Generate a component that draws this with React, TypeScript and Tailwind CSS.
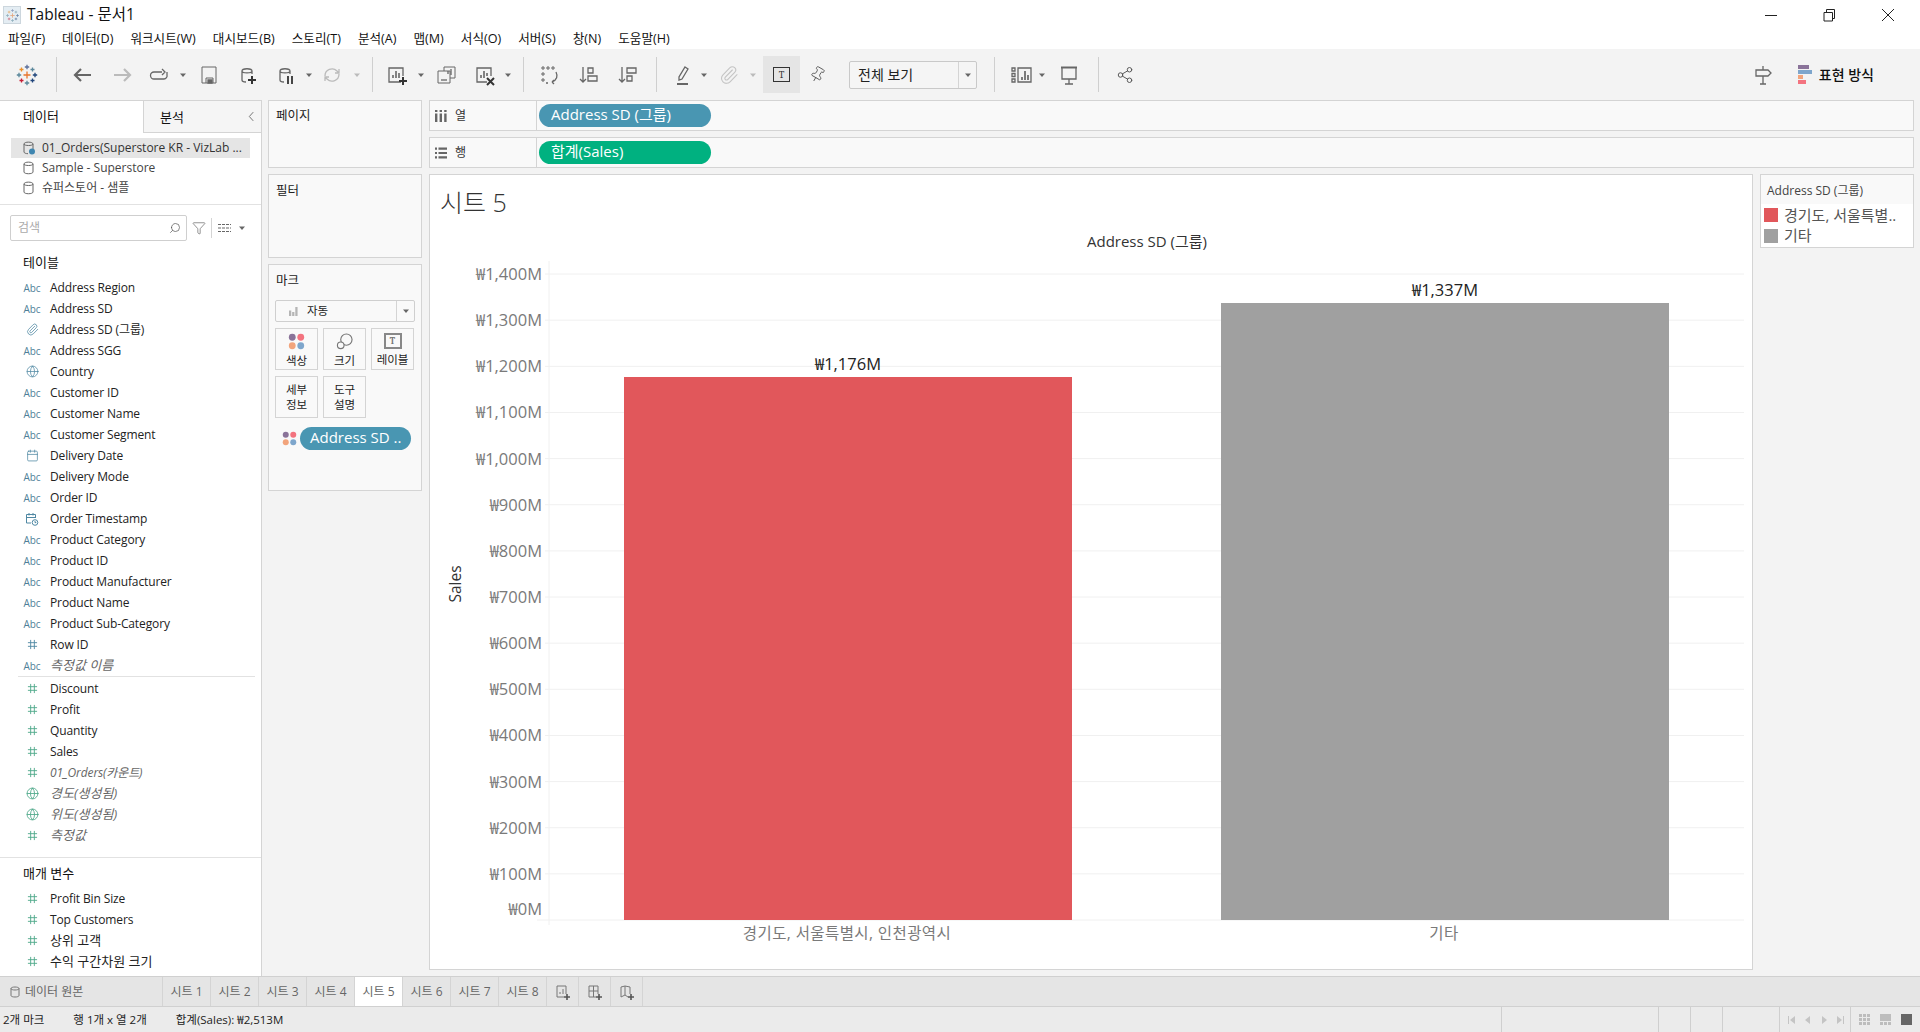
import { ReactNode } from "react";
import { Calendar, Globe, Paperclip, Search, Funnel, Share2, Pin } from "lucide-react";

const dims: [string, string, boolean?][] = [
  ["abc", "Address Region"],
  ["abc", "Address SD"],
  ["clip", "Address SD (그룹)"],
  ["abc", "Address SGG"],
  ["globe", "Country"],
  ["abc", "Customer ID"],
  ["abc", "Customer Name"],
  ["abc", "Customer Segment"],
  ["date", "Delivery Date"],
  ["abc", "Delivery Mode"],
  ["abc", "Order ID"],
  ["datetime", "Order Timestamp"],
  ["abc", "Product Category"],
  ["abc", "Product ID"],
  ["abc", "Product Manufacturer"],
  ["abc", "Product Name"],
  ["abc", "Product Sub-Category"],
  ["hash", "Row ID"],
  ["abc", "측정값 이름", true],
];
const measures: [string, string, boolean?][] = [
  ["hashg", "Discount"],
  ["hashg", "Profit"],
  ["hashg", "Quantity"],
  ["hashg", "Sales"],
  ["hashg", "01_Orders(카운트)", true],
  ["globeg", "경도(생성됨)", true],
  ["globeg", "위도(생성됨)", true],
  ["hashg", "측정값", true],
];
const params: [string, string, boolean?][] = [
  ["hashg", "Profit Bin Size"],
  ["hashg", "Top Customers"],
  ["hashg", "상위 고객"],
  ["hashg", "수익 구간차원 크기"],
];
const menus = ["파일(F)", "데이터(D)", "워크시트(W)", "대시보드(B)", "스토리(T)", "분석(A)", "맵(M)", "서식(O)", "서버(S)", "창(N)", "도움말(H)"];
const sheets = ["시트 1", "시트 2", "시트 3", "시트 4", "시트 5", "시트 6", "시트 7", "시트 8"];
const ticks = [1400, 1300, 1200, 1100, 1000, 900, 800, 700, 600, 500, 400, 300, 200, 100];

function Ico({ children, className = "" }: { children: ReactNode; className?: string }) {
  return (
    <svg viewBox="0 0 24 24" fill="none" stroke="#666" strokeWidth="1.3" className={`w-6 h-6 shrink-0 ${className}`}>
      {children}
    </svg>
  );
}

function Caret({ className = "", light = false }: { className?: string; light?: boolean }) {
  return (
    <svg viewBox="0 0 8 8" className={`w-2 h-2 shrink-0 ${className}`}>
      <path d="M1 2.5h6L4 6z" fill={light ? "#bbb" : "#666"} />
    </svg>
  );
}

function Sep({ className = "" }: { className?: string }) {
  return <div className={`w-px h-[35px] bg-[#cfcfcf] shrink-0 ${className}`} />;
}

function Cyl({ color = "#666" }: { color?: string }) {
  return (
    <path
      d="M7 8c0-3 10-3 10 0v3M7 8c0 2.5 10 2.5 10 0M7 8v9c0 1.5 2 2 4 2"
      stroke={color}
      fill="none"
    />
  );
}

function Dots({ small = false }: { small?: boolean }) {
  return (
    <svg viewBox="0 0 16 16" className={small ? "w-[15px] h-[15px] shrink-0" : "w-[17px] h-[17px] shrink-0"}>
      <circle cx="4" cy="4" r="3.2" fill="#8a7399" />
      <circle cx="12" cy="4" r="3.2" fill="#f3737f" />
      <circle cx="4" cy="12" r="3.2" fill="#f2a47c" />
      <circle cx="12" cy="12" r="3.2" fill="#7ea6cc" />
    </svg>
  );
}

function TableauMark({ size }: { size: string }) {
  const marks: [number, number, number, string][] = [
    [12, 12, 3.5, "#e8762d"],
    [12, 4, 2.2, "#5b6f9b"],
    [12, 20, 2.2, "#59879b"],
    [4, 12, 2.2, "#59879b"],
    [20, 12, 2.2, "#1f447a"],
    [6.5, 6.5, 2, "#eb912b"],
    [17.5, 6.5, 2, "#5b879b"],
    [6.5, 17.5, 2, "#c72037"],
    [17.5, 17.5, 2, "#1f447a"],
  ];
  return (
    <svg viewBox="0 0 24 24" className={size} fill="none" strokeWidth="1.3">
      {marks.map(([x, y, r, c], i) => (
        <path key={i} d={`M${x - r} ${y}H${x + r}M${x} ${y - r}V${y + r}`} stroke={c} />
      ))}
    </svg>
  );
}

function FieldIcon({ kind }: { kind: string }) {
  const blue = "#4f88a3";
  const green = "#4fa98a";
  if (kind === "abc") {
    return <span className="w-[24px] text-[10px] font-medium text-[#4f7f99] text-center leading-none">Abc</span>;
  }
  if (kind === "clip") return <span className="w-[24px] flex justify-center"><Paperclip size={13} color={blue} strokeWidth={1.4} /></span>;
  if (kind === "globe") return <span className="w-[24px] flex justify-center"><Globe size={13} color={blue} strokeWidth={1.4} /></span>;
  if (kind === "globeg") return <span className="w-[24px] flex justify-center"><Globe size={13} color={green} strokeWidth={1.6} /></span>;
  if (kind === "date") return <span className="w-[24px] flex justify-center"><Calendar size={13} color={blue} strokeWidth={1.4} /></span>;
  if (kind === "datetime") {
    return (
      <span className="w-[24px] flex justify-center">
        <svg viewBox="0 0 14 14" className="w-[14px] h-[14px]" fill="none" stroke={blue} strokeWidth="1">
          <path d="M6 11H1.5V2.5h9V6M1.5 5.5h9M4 1v2.5M8 1v2.5" />
          <circle cx="10" cy="10.5" r="2.8" />
          <path d="M10 9v1.6h1.3" />
        </svg>
      </span>
    );
  }
  const c = kind === "hashg" ? green : blue;
  return (
    <span className="w-[24px] flex justify-center">
      <svg viewBox="0 0 12 12" className="w-[11px] h-[11px]" fill="none" stroke={c} strokeWidth="1">
        <path d="M4 1v10M8 1v10M1 4h10M1 8h10" />
      </svg>
    </span>
  );
}

function FieldRow({ kind, label, italic }: { kind: string; label: string; italic?: boolean }) {
  const hangul = /^[^A-Za-z]+$/.test(label);
  const size = hangul ? "text-[13px]" : "text-[12px] tracking-[-0.12px]";
  return (
    <div className="h-[21px] flex items-center pl-[20px]">
      <FieldIcon kind={kind} />
      <span className={`ml-[6px] whitespace-nowrap ${size} ${italic ? "italic text-[#666]" : "text-[#222]"}`}>{label}</span>
    </div>
  );
}

function MarkButton({ children, label }: { children?: ReactNode; label: ReactNode }) {
  return (
    <div className={`w-[43px] h-[42px] border border-[#d4d4d4] bg-[#f9f9f9] flex flex-col items-center text-[11.5px] leading-[15px] text-[#222] text-center whitespace-nowrap ${children ? "justify-start pt-[4px]" : "justify-center"}`}>
      {children}
      <span className={children ? "mt-[3px]" : ""}>{label}</span>
    </div>
  );
}

function Shelf({ icon, label, pill, color }: { icon: ReactNode; label: string; pill: string; color: string }) {
  return (
    <div className="h-[31px] bg-[#f9f9f9] border border-[#d4d4d4] flex items-center">
      <div className="w-[107px] h-full border-r border-[#d4d4d4] flex items-center pl-[5px] text-[12px] text-[#333]">
        {icon}
        <span className="ml-[8px]">{label}</span>
      </div>
      <div className={`ml-[2px] w-[172px] h-[23px] rounded-full text-white text-[15px] leading-[21px] pl-[12px] ${color}`}>{pill}</div>
    </div>
  );
}

function Chart() {
  const y = (v: number) => 920 - (v / 100) * 46.14;
  return (
    <svg viewBox="430 231 1322 738" className="w-[1322px] h-[738px] block">
      <path d="M549 261V925" stroke="#f0f0f0" />
      {ticks.map((t) => (
        <path key={t} d={`M545 ${y(t)}H1744`} stroke="#f0f0f0" />
      ))}
      <path d="M537 920H1744" stroke="#f0f0f0" />
      {ticks.map((t) => (
        <text key={t} x="542" y={y(t) + 6} textAnchor="end" fontSize="16.5" fill="#7a7a7a">
          {`₩${t.toLocaleString("en-US")}M`}
        </text>
      ))}
      <text x="542" y="915" textAnchor="end" fontSize="16.5" fill="#7a7a7a">₩0M</text>
      <text x="1147" y="247" textAnchor="middle" fontSize="15" fill="#333">Address SD (그룹)</text>
      <text transform="translate(461 584) rotate(-90)" textAnchor="middle" fontSize="15.5" fill="#333">Sales</text>
      <rect x="624" y="377" width="448" height="543" fill="#e1575b" />
      <rect x="1221" y="303" width="448" height="617" fill="#a0a0a0" />
      <text x="848" y="370" textAnchor="middle" fontSize="16.5" fill="#222">₩1,176M</text>
      <text x="1445" y="296" textAnchor="middle" fontSize="16.5" fill="#222">₩1,337M</text>
      <text x="847" y="939" textAnchor="middle" fontSize="15.5" letterSpacing="0.4" fill="#7a7a7a">경기도, 서울특별시, 인천광역시</text>
      <text x="1444" y="939" textAnchor="middle" fontSize="15.5" letterSpacing="0.4" fill="#7a7a7a">기타</text>
    </svg>
  );
}

export default function App() {
  return (
    <div className="w-[1920px] h-[1032px] overflow-hidden flex flex-col bg-[#f3f3f3] text-[#222] font-['Open_Sans','Noto_Sans_CJK_KR',sans-serif]">
      {/* Title bar */}
      <div className="h-[30px] bg-white flex items-center relative shrink-0">
        <div className="ml-[3px] w-[18px] h-[18px] bg-[#e4edf3] border border-[#ccd6dd] flex items-center justify-center">
          <TableauMark size="w-[15px] h-[15px] opacity-60" />
        </div>
        <span className="ml-[6px] text-[15.5px] text-[#111]">Tableau - 문서1</span>
        <div className="ml-auto flex items-center">
          <svg viewBox="0 0 14 14" className="w-[14px] h-[14px]" stroke="#222" fill="none"><path d="M1 7.5h12" /></svg>
          <svg viewBox="0 0 14 14" className="w-[14px] h-[14px] ml-[44px]" stroke="#222" fill="none"><path d="M2 4.5h8.5V13H2zM4.5 4.5V1.5H12.5V10.5H10.5" /></svg>
          <svg viewBox="0 0 14 14" className="w-[14px] h-[14px] ml-[45px] mr-[25px]" stroke="#222" fill="none"><path d="M1 1l12 12M13 1L1 13" /></svg>
        </div>
      </div>
      {/* Menu */}
      <div className="h-[19px] bg-white flex items-center gap-[17px] pl-[8px] text-[12.6px] text-[#111] shrink-0">
        {menus.map((m) => (
          <span key={m}>{m}</span>
        ))}
      </div>
      {/* Toolbar */}
      <div className="h-[51px] flex items-center shrink-0">
        <TableauMark size="w-6 h-6 ml-[15px] shrink-0" />
        <Sep className="ml-[17px]" />
        <Ico className="ml-[14px]"><path d="M20 12H4M10 6l-6 6 6 6" strokeWidth="2.2" /></Ico>
        <Ico className="ml-[15px]"><path d="M20 12H4M14 6l6 6-6 6" stroke="#bbb" strokeWidth="2.2" /></Ico>
        <Ico className="ml-[13px]"><path d="M15 9H7a3.2 3.2 0 0 0 0 7h10a3.2 3.2 0 0 0 3-4V9M15 6l3 3-3 3" /></Ico>
        <Caret className="ml-[8px]" />
        <Ico className="ml-[10px]"><path d="M5 4h14v16H5zM9 20v-5h7v5" strokeWidth="1" /><path d="M11 17h4v3h-4z" fill="#666" /></Ico>
        <Ico className="ml-[14px]"><Cyl /><path d="M17 13v8M13 17h8" stroke="#333" strokeWidth="2" /></Ico>
        <Ico className="ml-[14px]"><Cyl /><path d="M15 13v8M19 13v8" stroke="#333" strokeWidth="1.8" /></Ico>
        <Caret className="ml-[8px]" />
        <Ico className="ml-[7px]"><path d="M5 13a7 7 0 0 1 12-5l2 2M19 11a7 7 0 0 1-12 5l-2-2M19 6v4h-4M5 18v-4h4" stroke="#bbb" /></Ico>
        <Caret className="ml-[9px]" light />
        <Sep className="ml-[11px]" />
        <Ico className="ml-[12px]"><path d="M16 19H4V5h14v8" /><path d="M8 15v-3M11 15V8M14 15v-5" strokeWidth="1.6" /><path d="M18 14v8M14 18h8" stroke="#333" strokeWidth="2" /></Ico>
        <Caret className="ml-[8px]" />
        <Ico className="ml-[9px]"><path d="M10 8V4h11v11h-5M4 8h12v12H4z" strokeWidth="1" /><path d="M14 11V8M17 12V6" /><path d="M7 17h6" /></Ico>
        <Ico className="ml-[15px]"><path d="M14 19H4V5h14v8" /><path d="M8 15v-3M11 15V8M14 13v-3" strokeWidth="1.6" /><path d="M14 15l7 7M21 15l-7 7" stroke="#333" strokeWidth="2" /></Ico>
        <Caret className="ml-[7px]" />
        <Sep className="ml-[11px]" />
        <Ico className="ml-[13px]"><path d="M5 4h2v2H5zM10 4h2v2h-2zM15 4h2v2h-2zM5 10h2v2H5zM5 16h2v2H5z" strokeWidth="1" /><path d="M19 9c2 4 1 8-4 10M15 19l2-2M15 19l2 2M9 20h2" /></Ico>
        <Ico className="ml-[16px]"><path d="M6 4v15M3 16l3 3 3-3" /><path d="M11 5h5v5h-5zM11 13h9v5h-9z" /></Ico>
        <Ico className="ml-[15px]"><path d="M6 4v15M3 16l3 3 3-3" /><path d="M11 5h9v5h-9zM11 13h5v5h-5z" /></Ico>
        <Sep className="ml-[16px]" />
        <Ico className="ml-[14px]"><path d="M14 4l3 2-6 10-3 1 0-3z" /><path d="M6 21h11" strokeWidth="2" /></Ico>
        <Caret className="ml-[5px]" />
        <span className="ml-[9px] w-6 flex justify-center shrink-0"><Paperclip size={20} color="#c4c4c4" strokeWidth={1.3} /></span>
        <Caret className="ml-[8px]" light />
        <div className="ml-[6px] w-[37px] h-[37px] bg-[#e5e5e5] flex items-center justify-center shrink-0">
          <div className="w-[17px] h-[15px] border border-[#333] flex items-center justify-center text-[10px] font-serif text-[#333] leading-none">T</div>
        </div>
        <span className="ml-[5px] w-6 flex justify-center shrink-0"><Pin size={17} color="#555" strokeWidth={1.2} className="rotate-[30deg]" /></span>
        <div className="ml-[20px] w-[128px] h-[28px] rounded-[2px] border border-[#c9c9c9] flex items-center shrink-0 bg-[#f5f5f5]">
          <span className="flex-1 pl-[8px] text-[14px] text-[#222]">전체 보기</span>
          <div className="w-[18px] h-full border-l border-[#d4d4d4] flex items-center justify-center"><Caret /></div>
        </div>
        <Sep className="ml-[17px]" />
        <Ico className="ml-[14px]"><path d="M3 5h3v3H3zM3 10.5h3v3H3zM3 16h3v3H3zM9 5h13v14H9z" /><path d="M13 17v-3M16 17V8M19 17v-5" strokeWidth="1.7" /></Ico>
        <Caret className="ml-[5px]" />
        <Ico className="ml-[11px]"><path d="M5 5v11h14V5M12 16v5M8 21h8" /><path d="M4 4.5h16" strokeWidth="2" /></Ico>
        <Sep className="ml-[17px]" />
        <span className="ml-[14px] w-6 flex justify-center shrink-0"><Share2 size={18} color="#555" strokeWidth={1.3} /></span>
        <Ico className="ml-auto"><path d="M11 3v4M4 7h12l3 3-3 3H4zM11 13v8M8 21h6" /></Ico>
        <svg viewBox="0 0 14 19" className="ml-[22px] w-[14px] h-[19px] shrink-0">
          <rect width="11" height="4" fill="#8a7399" />
          <rect y="5" width="14" height="4" fill="#7ea6cc" />
          <rect y="10" width="5" height="4" fill="#f2a47c" />
          <rect y="15" width="8" height="4" fill="#f3737f" />
        </svg>
        <span className="ml-[7px] mr-[46px] text-[14px] font-medium text-[#111] whitespace-nowrap">표현 방식</span>
      </div>

      <div className="h-[876px] flex shrink-0">
        {/* Data pane */}
        <div className="w-[262px] bg-white border-r border-t border-[#d4d4d4] shrink-0 flex flex-col">
          <div className="h-[32px] flex shrink-0">
            <div className="w-[143px] pl-[23px] text-[13px] leading-[31px] text-[#111]">데이터</div>
            <div className="flex-1 bg-[#f5f5f5] border-l border-b border-[#d4d4d4] pl-[16px] text-[13px] leading-[30px] text-[#111] flex items-center">
              <span>분석</span>
              <svg viewBox="0 0 8 12" className="ml-auto mr-[6px] w-[7px] h-[11px]" fill="none" stroke="#666"><path d="M6 1L1.5 6 6 11" /></svg>
            </div>
          </div>
          <div className="h-[72px] pt-[5px] border-b border-[#e2e2e2] shrink-0 text-[12px]">
            <div className="mx-[11px] h-[20px] w-[239px] bg-[#e5e5e5] flex items-center pl-[12px] text-[#333]">
              <svg viewBox="0 0 12 14" className="w-[12px] h-[14px] shrink-0" fill="none" stroke="#666"><path d="M1 3c0-2.5 9-2.5 9 0v5M1 3c0 2 9 2 9 0M1 3v8c0 1 2 1.7 4 1.7" /><circle cx="9" cy="10.5" r="3" fill="#3f86b0" stroke="none" /></svg>
              <span className="ml-[7px] whitespace-nowrap">01_Orders(Superstore KR - VizLab ...</span>
            </div>
            {["Sample - Superstore", "슈퍼스토어 - 샘플"].map((s) => (
              <div key={s} className="h-[20px] ml-[23px] flex items-center text-[#444]">
                <svg viewBox="0 0 12 14" className="w-[12px] h-[14px] shrink-0" fill="none" stroke="#666"><path d="M1 3c0-2.5 9-2.5 9 0v8c0 2.3-9 2.3-9 0zM1 3c0 2 9 2 9 0" /></svg>
                <span className="ml-[7px]">{s}</span>
              </div>
            ))}
          </div>
          <div className="h-[26px] mt-[10px] ml-[10px] flex items-center shrink-0">
            <div className="w-[177px] h-[26px] border border-[#cfcfcf] rounded-[2px] flex items-center pl-[7px] text-[12px] text-[#aaa]">
              <span>검색</span>
              <Search size={12} color="#555" strokeWidth={1.4} className="ml-auto mr-[5px] -scale-x-100" />
            </div>
            <Funnel size={14} color="#666" strokeWidth={1.2} className="ml-[5px]" />
            <div className="ml-[5px] w-px h-[20px] bg-[#d4d4d4]" />
            <svg viewBox="0 0 13 10" className="ml-[6px] w-[13px] h-[10px]" stroke="#666"><path d="M0 1.5h13M0 5h13M0 8.5h13" strokeDasharray="3 1" /></svg>
            <Caret className="ml-[7px]" />
          </div>
          <div className="h-[36px] pl-[23px] pt-[9px] text-[13px] leading-[24px] text-[#111] shrink-0">테이블</div>
          <div className="shrink-0">
            {dims.map(([k, l, it], i) => (
              <FieldRow key={i} kind={k} label={l} italic={it} />
            ))}
          </div>
          <div className="ml-[18px] mr-[6px] mb-px h-px bg-[#e2e2e2] shrink-0" />
          <div className="shrink-0">
            {measures.map(([k, l, it], i) => (
              <FieldRow key={i} kind={k} label={l} italic={it} />
            ))}
          </div>
          <div className="mt-[11px] h-px bg-[#e2e2e2] shrink-0" />
          <div className="h-[30px] pl-[23px] text-[13px] leading-[30px] text-[#111] shrink-0">매개 변수</div>
          <div className="shrink-0">
            {params.map(([k, l, it], i) => (
              <FieldRow key={i} kind={k} label={l} italic={it} />
            ))}
          </div>
        </div>

        {/* Cards column */}
        <div className="w-[154px] ml-[6px] flex flex-col gap-[6px] shrink-0">
          <div className="h-[68px] bg-[#f9f9f9] border border-[#d4d4d4] px-[7px] pt-[6px] text-[12.5px] text-[#222]">페이지</div>
          <div className="h-[84px] bg-[#f9f9f9] border border-[#d4d4d4] px-[7px] pt-[7px] text-[12.5px] text-[#222]">필터</div>
          <div className="h-[227px] bg-[#f9f9f9] border border-[#d4d4d4] px-[6px] pt-[5px] text-[12.5px] text-[#222]">
            <div className="pl-[1px] pt-[2px] h-[30px] leading-[18px]">마크</div>
            <div className="w-[140px] h-[22px] rounded-[2px] border border-[#cfcfcf] flex items-center text-[11.5px]">
              <svg viewBox="0 0 12 10" className="ml-[12px] w-[11px] h-[9px]" fill="#b5b5b5"><path d="M1 4h2.5v6H1zM4.5 5.5H7V10H4.5zM8 0h2.5v10H8z" /></svg>
              <span className="ml-[8px] flex-1">자동</span>
              <div className="w-[18px] h-full border-l border-[#d4d4d4] flex items-center justify-center"><Caret /></div>
            </div>
            <div className="mt-[6px] flex flex-wrap gap-x-[5px] gap-y-[6px] w-[143px]">
              <MarkButton label="색상"><Dots /></MarkButton>
              <MarkButton label="크기">
                <svg viewBox="0 0 18 18" className="w-[17px] h-[17px]" fill="none" stroke="#777" strokeWidth="1.2"><circle cx="11" cy="7" r="6" /><circle cx="5" cy="13" r="3.5" fill="#f9f9f9" /></svg>
              </MarkButton>
              <MarkButton label="레이블">
                <div className="w-[18px] h-[16px] border-2 border-[#888] flex items-center justify-center text-[9px] font-serif font-bold text-[#777] leading-none">T</div>
              </MarkButton>
              <MarkButton label={<>세부<br />정보</>} />
              <MarkButton label={<>도구<br />설명</>} />
            </div>
            <div className="mt-[9px] ml-[7px] flex items-center">
              <Dots small />
              <div className="ml-[3px] w-[111px] h-[23px] rounded-full bg-[#4996b2] text-white text-[15px] leading-[21px] pl-[10px] whitespace-nowrap overflow-hidden">Address SD ..</div>
            </div>
          </div>
        </div>

        {/* Shelves and view */}
        <div className="w-[1485px] ml-[7px] flex flex-col gap-[6px] shrink-0">
          <Shelf
            label="열"
            pill="Address SD (그룹)"
            color="bg-[#4996b2]"
            icon={<svg viewBox="0 0 12 12" className="w-[12px] h-[12px]" fill="#666"><path d="M0 0h2.4v2H0zM4.6 0H7v2H4.6zM9.2 0h2.4v2H9.2zM0 3.5h2.4V12H0zM4.6 3.5H7V12H4.6zM9.2 3.5h2.4V12H9.2z" /></svg>}
          />
          <Shelf
            label="행"
            pill="합계(Sales)"
            color="bg-[#00b180]"
            icon={<svg viewBox="0 0 12 12" className="w-[12px] h-[12px]" fill="#666"><path d="M0 .5h2v2.2H0zM3.5 .5H12v2.2H3.5zM0 4.9h2v2.2H0zM3.5 4.9H12v2.2H3.5zM0 9.3h2v2.2H0zM3.5 9.3H12v2.2H3.5z" /></svg>}
          />
          <div className="flex items-start">
            <div className="w-[1324px] h-[796px] bg-white border border-[#d4d4d4] shrink-0">
              <div className="h-[56px] pl-[10px] pt-[9px] text-[25px] leading-[36px] text-[#333] font-light">시트 5</div>
              <Chart />
            </div>
            <div className="ml-[7px] w-[154px] h-[74px] bg-white border border-[#d4d4d4] shrink-0 text-[12px]">
              <div className="h-[29px] bg-[#f9f9f9] pl-[6px] leading-[31px] text-[#444]">Address SD (그룹)</div>
              <div className="flex items-center pl-[3px] h-[21px] pt-[1px] text-[#555] text-[15px]">
                <div className="w-[14px] h-[14px] bg-[#e1575b] shrink-0" />
                <span className="ml-[6px] whitespace-nowrap">경기도, 서울특별..</span>
              </div>
              <div className="flex items-center pl-[3px] h-[21px] text-[#555] text-[15px]">
                <div className="w-[14px] h-[14px] bg-[#a0a0a0] shrink-0" />
                <span className="ml-[6px]">기타</span>
              </div>
            </div>
          </div>
        </div>
      </div>

      {/* Sheet tabs */}
      <div className="h-[30px] bg-[#e5e5e5] border-t border-[#d0d0d0] flex items-stretch shrink-0 text-[12px] text-[#666]">
        <div className="w-[163px] flex items-center pl-[10px] border-r border-[#d4d4d4]">
          <svg viewBox="0 0 10 12" className="w-[10px] h-[12px]" fill="none" stroke="#777"><path d="M1 2.5c0-2 8-2 8 0v7c0 2-8 2-8 0zM1 2.5c0 2 8 2 8 0" /></svg>
          <span className="ml-[5px]">데이터 원본</span>
        </div>
        {sheets.map((s) => (
          <div key={s} className={s === "시트 5" ? "w-[48px] flex items-center justify-center border-r border-[#d4d4d4] bg-white" : "w-[48px] flex items-center justify-center border-r border-[#d4d4d4]"}>
            {s}
          </div>
        ))}
        <div className="w-[32px] flex items-center justify-center border-r border-[#d4d4d4]">
          <svg viewBox="0 0 16 16" className="w-4 h-4" fill="none" stroke="#777"><path d="M11 10V2H2v11h7" /><path d="M5 10V8M8 10V5" /><path d="M12 10v6M9 13h6" stroke="#555" strokeWidth="1.6" /></svg>
        </div>
        <div className="w-[32px] flex items-center justify-center border-r border-[#d4d4d4]">
          <svg viewBox="0 0 16 16" className="w-4 h-4" fill="none" stroke="#777"><path d="M11 10V2H2v11h7M2 7h9M6.5 2v11" /><path d="M12 10v6M9 13h6" stroke="#555" strokeWidth="1.6" /></svg>
        </div>
        <div className="w-[32px] flex items-center justify-center border-r border-[#d4d4d4]">
          <svg viewBox="0 0 16 16" className="w-4 h-4" fill="none" stroke="#777"><path d="M9 13l-3-2-4 2V3l4-1 5 1v7M6 2v9" /><path d="M12 10v6M9 13h6" stroke="#555" strokeWidth="1.6" /></svg>
        </div>
      </div>

      {/* Status bar */}
      <div className="h-[26px] bg-[#ebebeb] border-t border-[#d0d0d0] flex items-stretch shrink-0 text-[11.5px] text-[#222]">
        <div className="flex items-center w-[1501px] pl-[3px]">
          <span>2개 마크</span>
          <span className="ml-[29px]">행 1개 x 열 2개</span>
          <span className="ml-[29px]">합계(Sales): ₩2,513M</span>
        </div>
        <div className="w-[157px] border-l border-[#cfcfcf]" />
        <div className="w-[32px] border-l border-[#cfcfcf]" />
        <div className="w-[32px] border-l border-[#cfcfcf]" />
        <div className="w-[57px] border-l border-[#cfcfcf]" />
        <div className="w-[71px] border-l border-[#cfcfcf] flex items-center pl-[8px] gap-[8px]">
          <svg viewBox="0 0 8 8" className="w-2 h-2" fill="#c4c4c4"><path d="M0 0h1v8H0zM7 0v8L2 4z" /></svg>
          <svg viewBox="0 0 8 8" className="w-2 h-2" fill="#c4c4c4"><path d="M6 0v8L1 4z" /></svg>
          <svg viewBox="0 0 8 8" className="w-2 h-2" fill="#c4c4c4"><path d="M2 0v8l5-4z" /></svg>
          <svg viewBox="0 0 8 8" className="w-2 h-2" fill="#c4c4c4"><path d="M7 0h1v8H7zM1 0v8l5-4z" /></svg>
        </div>
        <div className="flex-1 border-l border-[#cfcfcf] flex items-center pl-[8px] gap-[10px]">
          <svg viewBox="0 0 11 11" className="w-[11px] h-[11px]" fill="#bdbdbd"><path d="M0 0h3v3H0zM4 0h3v3H4zM8 0h3v3H8zM0 4h3v3H0zM4 4h3v3H4zM8 4h3v3H8zM0 8h3v3H0zM4 8h3v3H4zM8 8h3v3H8z" /></svg>
          <svg viewBox="0 0 11 11" className="w-[11px] h-[11px]" fill="#bdbdbd"><path d="M0 0h11v7H0zM0 8h3v3H0zM4 8h3v3H4zM8 8h3v3H8z" /></svg>
          <div className="w-[11px] h-[11px] bg-[#666]" />
        </div>
      </div>
    </div>
  );
}
